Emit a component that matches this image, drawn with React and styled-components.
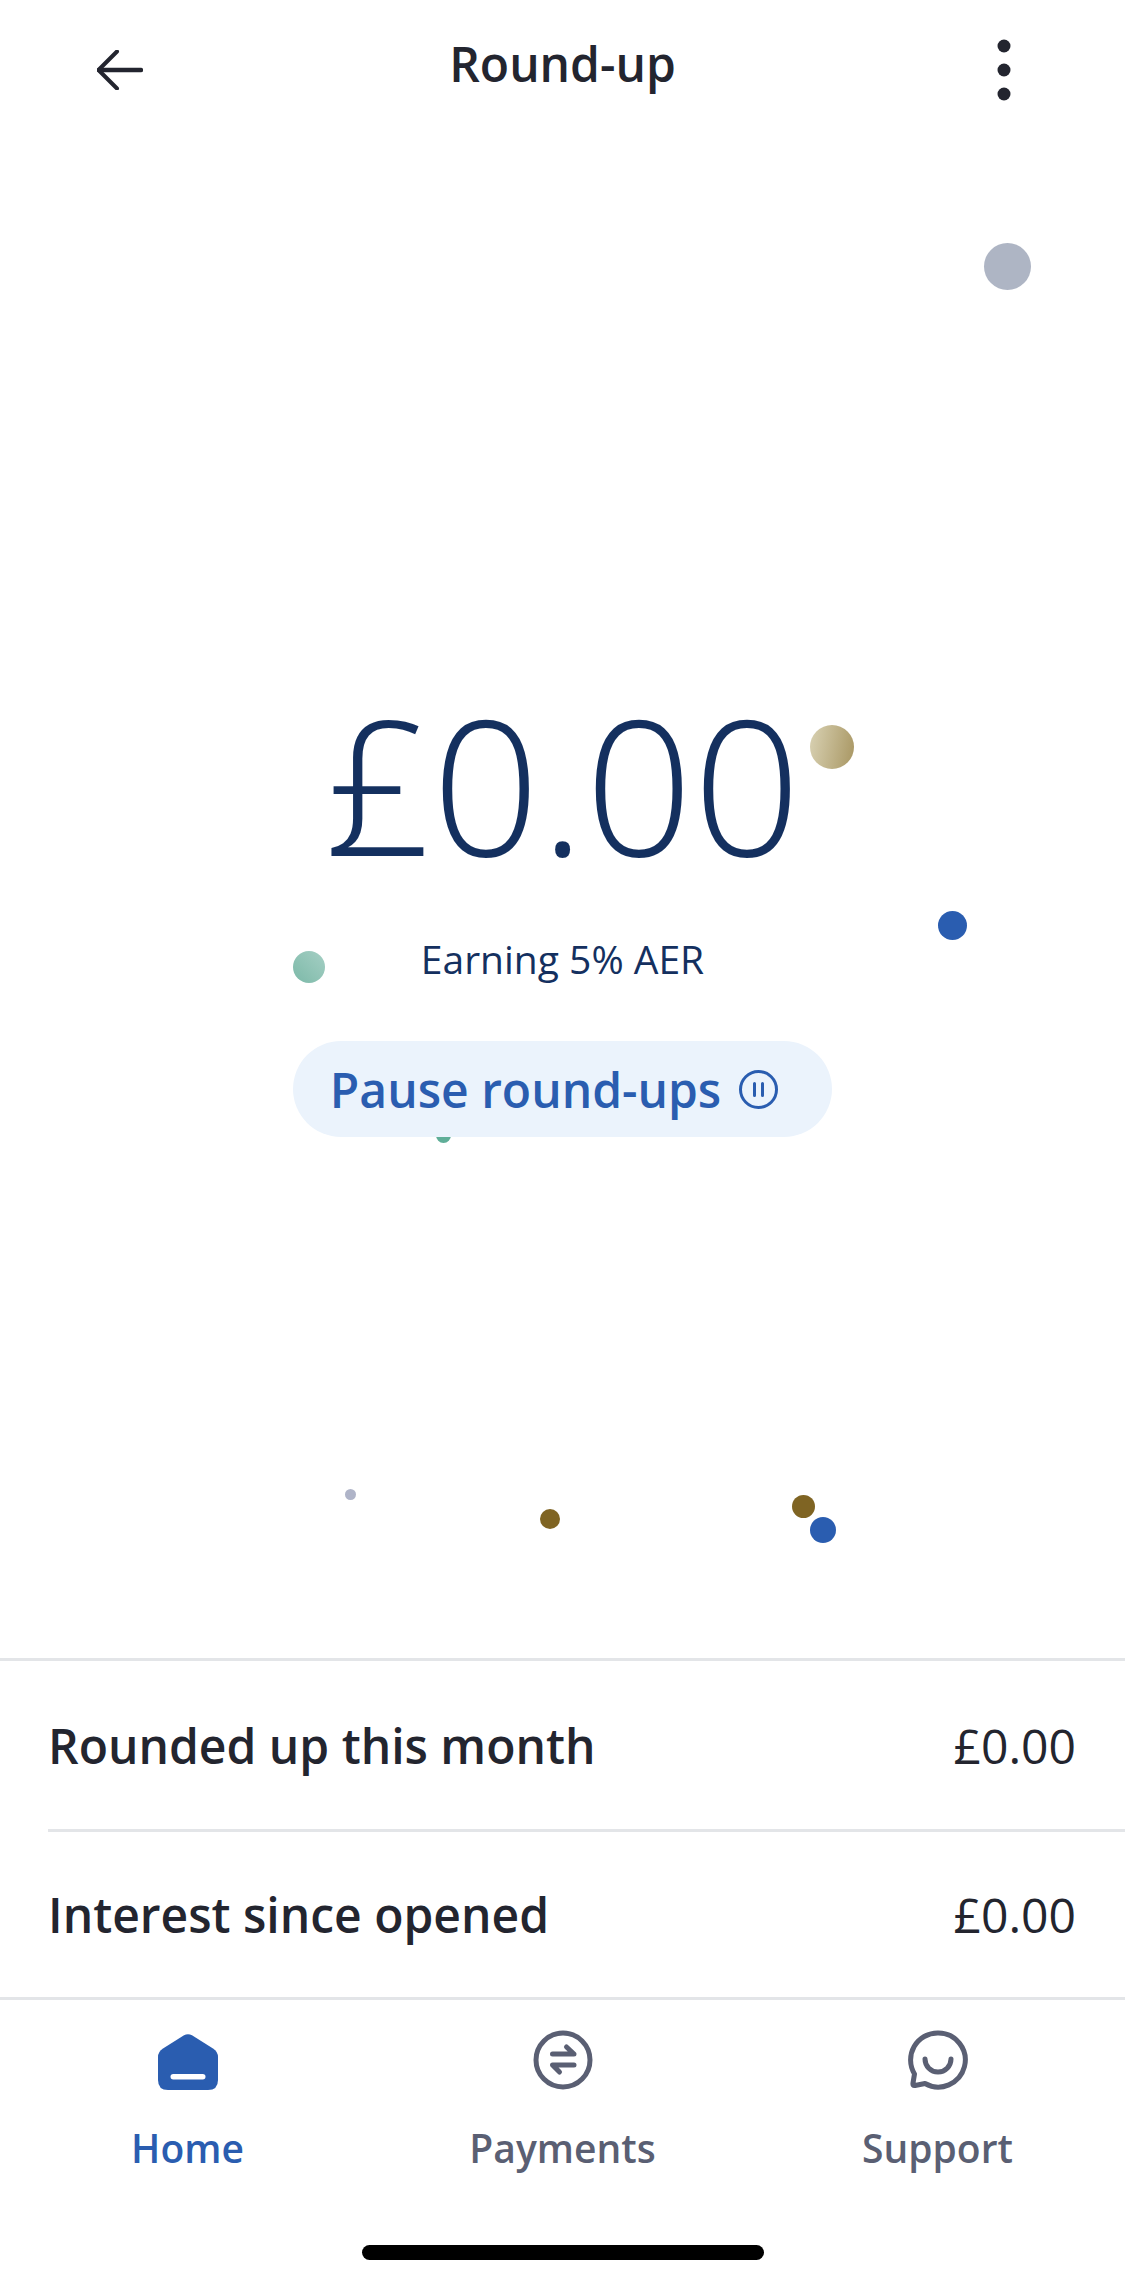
import React from 'react';
import styled, { createGlobalStyle } from 'styled-components';

const BLUE = '#2a5db0';
const NAVY = '#14305f';
const INK = '#23252f';
const SLATE = '#5a5f73';
const RULE = '#e3e5e8';

const GlobalStyle = createGlobalStyle`
    html, body {
        margin: 0;
        padding: 0;
        background: #fff;
    }

    body {
        font-family: "Open Sans", "Noto Sans", sans-serif;
    }
`;

const Screen = styled.div`
    width: 1125px;
    height: 2284px;
    display: flex;
    flex-direction: column;
    overflow: hidden;
    background: #fff;
`;

const Header = styled.header`
    height: 140px;
    flex: none;
    display: grid;
    grid-template-columns: 1fr auto 1fr;
    align-items: center;
    padding: 0 97px;
`;

const IconButton = styled.button`
    padding: 0;
    border: none;
    background: none;
    display: flex;
    justify-self: ${p => p.$end ? 'end' : 'start'};
    margin-right: ${p => p.$end ? '17px' : '0'};
`;

const Title = styled.h1`
    margin: 0 0 12px;
    font-size: 48px;
    line-height: 64px;
    font-weight: 600;
    color: ${INK};
`;

const Hero = styled.section`
    position: relative;
    flex: 1;
    display: flex;
    flex-direction: column;
    align-items: center;
    padding-top: 514px;
`;

const Amount = styled.div`
    font-size: 189px;
    line-height: 258px;
    font-weight: 300;
    color: ${NAVY};
`;

const Rate = styled.div`
    margin-top: 21px;
    font-size: 39px;
    line-height: 52px;
    color: ${NAVY};
`;

const PauseButton = styled.button`
    position: relative;
    z-index: 1;
    width: 539px;
    height: 96px;
    margin-top: 56px;
    padding: 0 17px 0 0;
    border: none;
    border-radius: 48px;
    background: #ebf3fc;
    color: ${BLUE};
    font-family: inherit;
    font-size: 48px;
    font-weight: 600;
    display: flex;
    align-items: center;
    justify-content: center;
    gap: 18px;
`;

const Dot = styled.span`
    position: absolute;
    left: ${p => p.$x - p.$size / 2}px;
    top: ${p => p.$y - 140 - p.$size / 2}px;
    width: ${p => p.$size}px;
    height: ${p => p.$size}px;
    border-radius: 50%;
    background: ${p => p.$fill};
`;

const Rows = styled.section`
    flex: none;
    border-top: 3px solid ${RULE};
    padding-left: 48px;
`;

const Row = styled.div`
    height: 168px;
    display: flex;
    align-items: center;
    justify-content: space-between;
    padding-right: 49px;
    & + & {
        height: 165px;
        border-top: 3px solid ${RULE};
    }
`;

const RowLabel = styled.span`
    font-size: 48px;
    font-weight: 600;
    color: ${INK};
`;

const RowValue = styled.span`
    font-size: 48px;
    color: ${INK};
`;

const TabBar = styled.nav`
    flex: none;
    height: 287px;
    box-sizing: border-box;
    border-top: 3px solid ${RULE};
    padding-top: 30px;
    display: grid;
    grid-template-columns: repeat(3, 1fr);
    align-content: start;
    position: relative;
`;

const Tab = styled.div`
    display: flex;
    flex-direction: column;
    align-items: center;
    gap: 32px;
    font-size: 39px;
    line-height: 52px;
    font-weight: 600;
    color: ${p => p.$active ? BLUE : SLATE};
`;

const TabIcon = styled.div`
    height: 60px;
    display: flex;
    align-items: flex-end;
`;

const HomeIndicator = styled.div`
    position: absolute;
    left: 362px;
    bottom: 24px;
    width: 402px;
    height: 15px;
    border-radius: 8px;
    background: #000;
`;

const dots = [
    { x: 1007, y: 266, size: 47, fill: '#aeb5c4' },
    { x: 832, y: 747, size: 44, fill: 'linear-gradient(100deg, #d9d2b4, #a89662)' },
    { x: 952, y: 925, size: 29, fill: BLUE },
    { x: 309, y: 967, size: 32, fill: 'linear-gradient(45deg, #7cb9a8, #a5cfc4)' },
    { x: 443, y: 1135, size: 15, fill: '#5fae98' },
    { x: 350, y: 1494, size: 11, fill: '#afb4c8' },
    { x: 550, y: 1519, size: 20, fill: '#7f6423' },
    { x: 803, y: 1506, size: 23, fill: '#7f6423' },
    { x: 823, y: 1530, size: 26, fill: BLUE },
];

const BackIcon = () => (
    <svg width="46" height="40" viewBox="0 0 46 40" fill="none" stroke={INK} strokeLinecap="round" strokeLinejoin="round">
        <path d="M2 20H44" strokeWidth="4.5" />
        <path d="M20 1.5L1.5 20L20 38.5" strokeWidth="4" />
    </svg>
);

const MoreIcon = () => (
    <svg width="14" height="62" viewBox="0 0 14 62" fill={INK}>
        <circle cx="7" cy="7" r="6.5" />
        <circle cx="7" cy="31" r="6.5" />
        <circle cx="7" cy="55" r="6.5" />
    </svg>
);

const PauseIcon = () => (
    <svg width="39" height="39" viewBox="0 0 39 39" fill="none" stroke={BLUE} strokeWidth="3" strokeLinecap="round">
        <circle cx="19.5" cy="19.5" r="18" />
        <path d="M15.5 13.5V25.5M23.5 13.5V25.5" />
    </svg>
);

const HomeIcon = () => (
    <svg width="60" height="56" viewBox="0 0 60 56">
        <path fill={BLUE} d="M26 1.3L5 14.5Q0 17.8 0 23V46Q0 56 10 56H50Q60 56 60 46V23Q60 17.8 55 14.5L34 1.3Q30 -0.8 26 1.3Z" />
        <rect x="12.5" y="40" width="35" height="5.5" rx="2.75" fill="#fff" />
    </svg>
);

const PaymentsIcon = () => (
    <svg width="60" height="60" viewBox="0 0 60 60" fill="none" stroke={SLATE} strokeWidth="5" strokeLinecap="round" strokeLinejoin="round">
        <circle cx="30" cy="30" r="27" />
        <path d="M19.5 24H41L33.5 17" />
        <path d="M41 35H19.5L26.5 42" />
    </svg>
);

const SupportIcon = () => (
    <svg width="60" height="60" viewBox="0 0 60 60" fill="none" stroke={SLATE} strokeWidth="5" strokeLinecap="round" strokeLinejoin="round">
        <path d="M30 3A27 27 0 1 1 17 53.5L7 55.5Q4.5 56 5 53L6.5 44A27 27 0 0 1 30 3Z" />
        <path d="M17 29A13 13 0 0 0 43 29" />
    </svg>
);

const App = () => (
    <>
        <GlobalStyle />
        <Screen>
            <Header>
                <IconButton aria-label="Back"><BackIcon /></IconButton>
                <Title>Round-up</Title>
                <IconButton $end aria-label="More"><MoreIcon /></IconButton>
            </Header>

            <Hero>
                {dots.map(d => (
                    <Dot key={`${d.x}-${d.y}`} $x={d.x} $y={d.y} $size={d.size} $fill={d.fill} />
                ))}
                <Amount>£0.00</Amount>
                <Rate>Earning 5% AER</Rate>
                <PauseButton>Pause round-ups <PauseIcon /></PauseButton>
            </Hero>

            <Rows>
                <Row>
                    <RowLabel>Rounded up this month</RowLabel>
                    <RowValue>£0.00</RowValue>
                </Row>
                <Row>
                    <RowLabel>Interest since opened</RowLabel>
                    <RowValue>£0.00</RowValue>
                </Row>
            </Rows>

            <TabBar>
                <Tab $active><TabIcon><HomeIcon /></TabIcon>Home</Tab>
                <Tab><TabIcon><PaymentsIcon /></TabIcon>Payments</Tab>
                <Tab><TabIcon><SupportIcon /></TabIcon>Support</Tab>
                <HomeIndicator />
            </TabBar>
        </Screen>
    </>
);

export default App;
